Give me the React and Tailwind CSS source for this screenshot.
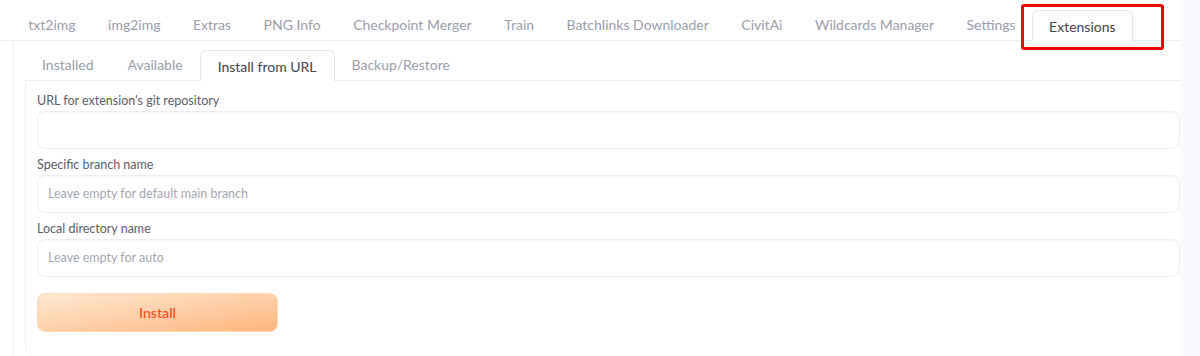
import React from 'react';

const topTabs = [
  'txt2img',
  'img2img',
  'Extras',
  'PNG Info',
  'Checkpoint Merger',
  'Train',
  'Batchlinks Downloader',
  'CivitAi',
  'Wildcards Manager',
  'Settings',
  'Extensions',
];

const subTabs = ['Installed', 'Available', 'Install from URL', 'Backup/Restore'];

const Tab = ({ label, active, pad }) => (
  <div
    className={
      (active
        ? 'h-[31px] flex items-center rounded-t-[6px] border border-b-0 border-[#e5e7eb] bg-white text-[#3f4654] -mb-px relative z-10 '
        : 'h-[31px] flex items-center text-[#9aa0ab] ') + pad
    }
  >
    {label}
  </div>
);

const Field = ({ label, placeholder }) => (
  <div className="flex flex-col">
    <div className="text-[12.5px] leading-[20px] text-[#5b606b]">{label}</div>
    <div className="h-[38px] rounded-[8px] border border-[#eceef1] shadow-[inset_0_1px_2px_rgba(0,0,0,0.04)] bg-white flex items-center px-[10px] text-[12.5px] text-[#a4a9b2]">
      {placeholder}
    </div>
  </div>
);

const App = () => {
  return (
    <div className="w-[1200px] h-[356px] bg-white flex overflow-hidden relative" style={{ fontFamily: 'Lato, "Open Sans", sans-serif' }}>
      <div className="w-[1180px] flex flex-col">
        {/* top tab bar */}
        <div className="h-[41px] pt-[10px] pl-[12px] flex items-end border-b border-[#eceef1] text-[14px]">
          {topTabs.map((t) => (
            <Tab key={t} label={t} active={t === 'Extensions'} pad="px-[16.25px]" />
          ))}
        </div>

        {/* outer panel */}
        <div className="ml-[13px] flex-1 border-l border-[#f0f1f3] pl-[11px] pt-[9px] flex flex-col">
          <div className="h-[31px] pl-[-1px] flex items-end border-b border-[#eceef1] text-[14px]">
            {subTabs.map((t) => (
              <Tab key={t} label={t} active={t === 'Install from URL'} pad="px-[17px]" />
            ))}
          </div>

          <div className="flex-1 border-l border-[#eceef1] rounded-bl-[8px] pl-[11px] pt-[10px] flex flex-col gap-[6px]">
            <Field label="URL for extension's git repository" placeholder="" />
            <Field label="Specific branch name" placeholder="Leave empty for default main branch" />
            <Field label="Local directory name" placeholder="Leave empty for auto" />
            <button className="mt-[10px] w-[241px] h-[39px] rounded-[8px] border border-[#ffd9b5] bg-gradient-to-br from-[#ffe9d2] to-[#ffb57c] text-[#f5581f] text-[14px] font-semibold">
              Install
            </button>
          </div>
        </div>
      </div>
      <div className="w-[20px] bg-[#f8fafd]" />

      {/* red highlight */}
      <div className="absolute left-[1021px] top-[4px] w-[143px] h-[46px] border-[3px] border-[#f00000] rounded-[3px]" />
    </div>
  );
};

export default App;
